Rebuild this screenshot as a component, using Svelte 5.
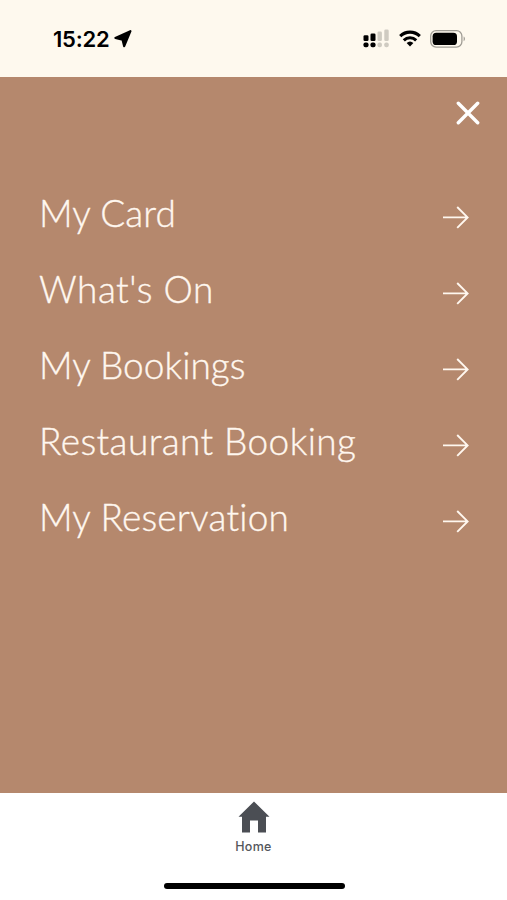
<script lang="ts">
  type MenuItem = { label: string; tracking: number }

  // tracking is the letter spacing in px, tuned per label
  const items: MenuItem[] = [
    { label: "My Card", tracking: 0.1 },
    { label: "What's On", tracking: 0.5 },
    { label: "My Bookings", tracking: 0.05 },
    { label: "Restaurant Booking", tracking: 0.4 },
    { label: "My Reservation", tracking: 0.2 },
  ]
</script>

<div class="screen">
  <header class="status">
    <div class="time">
      <span>15:22</span>
      <svg width="18" height="18" viewBox="0 0 18 18" aria-hidden="true">
        <path d="M16.4 1.2 10.2 16.2 8.5 9.6 1.4 8Z" fill="#000" stroke="#000" stroke-width="2.2" stroke-linejoin="round" />
      </svg>
    </div>
    <div class="indicators">
      <svg width="26" height="20" viewBox="0 0 26 20" aria-hidden="true">
        <g fill="#000">
          <rect x="0.5" y="6.3" width="5" height="5.7" rx="1.3" />
          <rect x="7.5" y="4.5" width="5" height="7.5" rx="1.3" />
          <rect x="0.5" y="13.4" width="5" height="4.8" rx="1.8" />
          <rect x="7.5" y="13.4" width="5" height="4.8" rx="1.8" />
        </g>
        <g fill="#cfcbc1">
          <rect x="14.5" y="2.5" width="4.4" height="9.5" rx="1.3" />
          <rect x="21.3" y="0.5" width="4.4" height="11.5" rx="1.3" />
          <rect x="14.5" y="13.4" width="4.4" height="4.8" rx="1.8" />
          <rect x="21.3" y="13.4" width="4.4" height="4.8" rx="1.8" />
        </g>
      </svg>
      <svg class="wifi" width="22" height="17" viewBox="0 0 22 17" aria-hidden="true">
        <g fill="none" stroke="#000" stroke-width="3.1">
          <path d="M1.2 6.1a14 14 0 0 1 19.6 0" />
          <path d="M4.8 10.3a9 9 0 0 1 12.4 0" />
        </g>
        <path d="M11 16.5 7.6 13.1a5 5 0 0 1 6.8 0Z" fill="#000" />
      </svg>
      <svg width="36" height="18" viewBox="0 0 36 18" aria-hidden="true">
        <rect x="0.7" y="0.7" width="31.2" height="16.4" rx="5.4" fill="none" stroke="#a09d95" stroke-width="1.3" />
        <rect x="2.6" y="2.8" width="24.4" height="12.2" rx="3.6" fill="#000" />
        <path d="M33.6 6.6c1.8.6 1.8 4 0 4.6Z" fill="#a09d95" />
      </svg>
    </div>
  </header>

  <main>
    <button class="close" aria-label="Close">
      <svg width="24" height="24" viewBox="0 0 24 24" aria-hidden="true">
        <path d="M2.3 2.3 21.7 21.7M21.7 2.3 2.3 21.7" fill="none" stroke="#fff" stroke-width="3.4" stroke-linecap="round" />
      </svg>
    </button>
    <nav>
      {#each items as item (item.label)}
        <div class="row">
          <span style="letter-spacing: {item.tracking}px">{item.label}</span>
          <svg width="26" height="24" viewBox="0 0 26 24" aria-hidden="true">
            <path d="M0 12.4H25M14.2 2 24.6 12.4 14.2 22.8" fill="none" stroke="#fff7ef" stroke-width="1.9" />
          </svg>
        </div>
      {/each}
    </nav>
  </main>

  <footer>
    <svg width="32" height="32" viewBox="0 0 32 32" aria-hidden="true">
      <path d="M16 0.5 31.5 15.8H28V31.4H20V19.5H12V31.4H4V15.8H0.5Z" fill="#4b4e54" />
    </svg>
    <span class="tab">Home</span>
    <div class="home-bar"></div>
  </footer>
</div>

<style>
  :global(body) {
    margin: 0;
  }
  .screen {
    width: 507px;
    height: 900px;
    display: flex;
    flex-direction: column;
    overflow: hidden;
    background: #fff;
  }
  .status {
    box-sizing: border-box;
    height: 77px;
    padding: 0 41px 0 53px;
    display: flex;
    align-items: center;
    justify-content: space-between;
    background: #fef9ee;
  }
  .time {
    display: flex;
    align-items: center;
    gap: 4px;
    font: 600 22px/28px Inter, sans-serif;
    letter-spacing: -0.2px;
    color: #000;
  }
  .indicators {
    display: flex;
    align-items: center;
    gap: 10px;
  }
  .wifi {
    margin-right: -1px;
  }
  main {
    height: 716px;
    box-sizing: border-box;
    background: #b5886d;
  }
  .close {
    display: block;
    margin-left: auto;
    margin-right: 27px;
    padding: 24px 0 0;
    border: 0;
    background: none;
    height: 48px;
  }
  .close svg,
  .row svg,
  footer svg {
    display: block;
  }
  nav {
    padding: 54px 38px 0 39px;
  }
  .row {
    height: 76px;
    display: flex;
    align-items: center;
    justify-content: space-between;
    font: 300 37px/48px Lato, sans-serif;
    color: #fff7ef;
    white-space: nowrap;
    -webkit-text-stroke: 0.35px #fff7ef;
  }
  .row span {
    padding-bottom: 9px;
  }
  footer {
    flex: 1;
    display: flex;
    flex-direction: column;
    align-items: center;
    padding-top: 8px;
  }
  .tab {
    margin-top: 5px;
    font: 500 12.5px/17px Inter, sans-serif;
    letter-spacing: 0.3px;
    color: #54565b;
  }
  .home-bar {
    width: 181px;
    height: 6px;
    margin-top: 28px;
    margin-left: 1px;
    border-radius: 3px;
    background: #000;
  }
</style>
